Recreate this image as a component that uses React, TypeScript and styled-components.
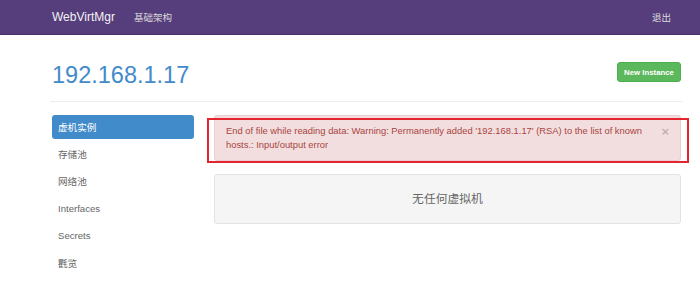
import React from "react";
import styled, { createGlobalStyle } from "styled-components";

const Global = createGlobalStyle`
  html, body { margin: 0; padding: 0; background: #fff; }
  body { font-family: "Liberation Sans", Arial, "Noto Sans CJK SC", sans-serif; font-size: 9.6px; color: #333; }
`;

const Navbar = styled.header`
  height: 34px;
  background: #563d7c;
  border-bottom: 1px solid #45306a;
  display: flex;
  align-items: center;
  padding: 0 29px 0 52px;
`;

const Brand = styled.span`
  font-size: 12px;
  color: #f2f2f2;
  margin-right: 19px;
`;

const NavLink = styled.span`
  font-size: 9.5px;
  color: #ddd;
  font-family: "Liberation Sans", "Noto Sans CJK SC", sans-serif;
`;

const Spacer = styled.div`
  flex: 1;
`;

const Container = styled.main`
  padding: 0 19px 0 52px;
`;

const Header = styled.div`
  display: flex;
  align-items: flex-start;
  justify-content: space-between;
  margin-top: 27px;
`;

const Title = styled.h1`
  margin: 0;
  font-size: 23.5px;
  line-height: 26px;
  font-weight: normal;
  color: #428bca;
`;

const GreenButton = styled.button`
  width: 64px;
  height: 20px;
  border: 1px solid #4cae4c;
  border-radius: 3px;
  background: #5cb85c;
  color: #fff;
  font-family: "Liberation Sans", Arial, sans-serif;
  font-size: 7.8px;
  font-weight: bold;
  padding: 0;
`;

const Rule = styled.hr`
  margin: 13px -2px 13px -2px;
  border: 0;
  border-top: 1px solid #eee;
`;

const Body = styled.div`
  display: grid;
  grid-template-columns: 142px 1fr;
  column-gap: 20px;
`;

const SideNav = styled.nav`
  display: flex;
  flex-direction: column;
  gap: 3.2px;
`;

const SideItem = styled.div<{ $active?: boolean }>`
  height: 24px;
  display: flex;
  align-items: center;
  padding-left: 6px;
  border-radius: 3px;
  font-size: 9.6px;
  background: ${(p) => (p.$active ? "#428bca" : "transparent")};
  color: ${(p) => (p.$active ? "#fff" : "#666")};
`;

const Main = styled.section`
  display: flex;
  flex-direction: column;
  gap: 13px;
`;

const Alert = styled.div`
  position: relative;
  background: #f2dede;
  border: 1px solid #ebccd1;
  border-radius: 3px;
  color: #a94442;
  font-size: 9.4px;
  line-height: 14px;
  padding: 8px 22px 8px 11px;
`;

const Close = styled.span`
  position: absolute;
  right: 11px;
  top: 9px;
  font-size: 13px;
  line-height: 13px;
  font-weight: bold;
  color: #000;
  opacity: 0.2;
`;

const Highlight = styled.div`
  position: absolute;
  top: 2px;
  left: -8px;
  right: -9px;
  bottom: -3px;
  border: 2px solid #e3262d;
  pointer-events: none;
`;

const Well = styled.div`
  background: #f5f5f5;
  border: 1px solid #e3e3e3;
  border-radius: 3px;
  height: 50px;
  display: flex;
  align-items: center;
  justify-content: center;
  font-family: "Noto Sans CJK SC", serif;
  font-size: 11.8px;
  color: #666;
  padding-bottom: 3px;
  box-sizing: border-box;
`;

export default function App() {
  const items = ["虚机实例", "存储池", "网络池", "Interfaces", "Secrets", "氍览"];
  return (
    <>
      <Global />
      <Navbar>
        <Brand>WebVirtMgr</Brand>
        <NavLink>基础架构</NavLink>
        <Spacer />
        <NavLink>退出</NavLink>
      </Navbar>
      <Container>
        <Header>
          <Title>192.168.1.17</Title>
          <GreenButton>New Instance</GreenButton>
        </Header>
        <Rule />
        <Body>
          <SideNav>
            {items.map((t, i) => (
              <SideItem key={t} $active={i === 0}>
                {t}
              </SideItem>
            ))}
          </SideNav>
          <Main>
            <Alert>
              End of file while reading data: Warning: Permanently added '192.168.1.17' (RSA) to the list of known
              hosts.: Input/output error
              <Close>×</Close>
              <Highlight />
            </Alert>
            <Well>无任何虚拟机</Well>
          </Main>
        </Body>
      </Container>
    </>
  );
}
